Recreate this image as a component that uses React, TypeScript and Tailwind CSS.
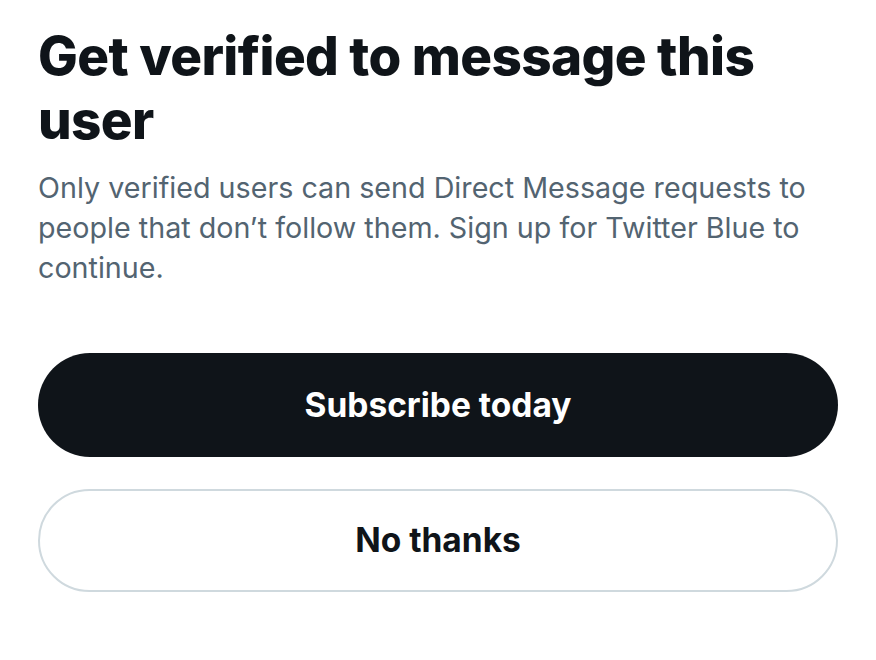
import React from 'react';

const App = () => {
  return (
    <div className="w-[876px] h-[660px] bg-white font-['Inter',sans-serif] px-[38px] pt-[24px]">
      <h1 className="text-[53px] leading-[64px] font-extrabold text-[#0f1419] tracking-[-0.6px]">
        Get verified to message this user
      </h1>
      <p className="mt-[16px] text-[28.7px] leading-[40px] text-[#536471]">
        Only verified users can send Direct Message requests to people that don’t follow them. Sign up for Twitter Blue to continue.
      </p>
      <div className="mt-[65px] flex flex-col gap-[32px]">
        <button className="h-[104px] w-full rounded-full bg-[#0f1419] text-white text-[33.5px] font-bold">
          Subscribe today
        </button>
        <button className="h-[103px] w-full rounded-full border-2 border-[#cfd9de] bg-white text-[#0f1419] text-[33.5px] font-bold">
          No thanks
        </button>
      </div>
    </div>
  );
};

export default App;
